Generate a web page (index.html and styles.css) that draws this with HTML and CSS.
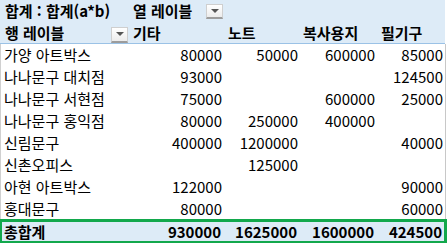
FILE: index.html
```html
<!DOCTYPE html>
<html lang="ko">
<head>
<meta charset="utf-8">
<link rel="stylesheet" href="styles.css">
</head>
<body>
<div class="pivot">
  <div class="row head head1">
    <div class="cell lbl">합계 : 합계(a*b)</div>
    <div class="cell lbl filter"><span>열 레이블</span><span class="dd dd1"></span></div>
    <div class="cell"></div><div class="cell"></div><div class="cell"></div>
  </div>
  <div class="row head head2">
    <div class="cell lbl filter"><span>행 레이블</span><span class="dd dd2"></span></div>
    <div class="cell lbl">기타</div>
    <div class="cell lbl c3">노트</div>
    <div class="cell lbl">복사용지</div>
    <div class="cell lbl c5">필기구</div>
  </div>
  <div class="row data"><div class="cell name">가양 아트박스</div><div class="cell num">80000</div><div class="cell num">50000</div><div class="cell num">600000</div><div class="cell num">85000</div></div>
  <div class="row data"><div class="cell name">나나문구 대치점</div><div class="cell num">93000</div><div class="cell num"></div><div class="cell num"></div><div class="cell num">124500</div></div>
  <div class="row data"><div class="cell name">나나문구 서현점</div><div class="cell num">75000</div><div class="cell num"></div><div class="cell num">600000</div><div class="cell num">25000</div></div>
  <div class="row data"><div class="cell name">나나문구 홍익점</div><div class="cell num">80000</div><div class="cell num">250000</div><div class="cell num">400000</div><div class="cell num"></div></div>
  <div class="row data"><div class="cell name">신림문구</div><div class="cell num">400000</div><div class="cell num">1200000</div><div class="cell num"></div><div class="cell num">40000</div></div>
  <div class="row data"><div class="cell name">신촌오피스</div><div class="cell num"></div><div class="cell num">125000</div><div class="cell num"></div><div class="cell num"></div></div>
  <div class="row data"><div class="cell name">아현 아트박스</div><div class="cell num">122000</div><div class="cell num"></div><div class="cell num"></div><div class="cell num">90000</div></div>
  <div class="row data"><div class="cell name">홍대문구</div><div class="cell num">80000</div><div class="cell num"></div><div class="cell num"></div><div class="cell num">60000</div></div>
  <div class="row total"><div class="cell name">총합계</div><div class="cell num">930000</div><div class="cell num">1625000</div><div class="cell num">1600000</div><div class="cell num">424500</div></div>
</div>
</body>
</html>
```
FILE: styles.css
```css
html, body {
  margin: 0;
  padding: 0;
  background: #ffffff;
}
body {
  font-family: "Noto Sans CJK KR", "Noto Sans", sans-serif;
  font-size: 15px;
  color: #000000;
}
.pivot {
  width: 445px;
  overflow: visible;
}
.row {
  display: grid;
  grid-template-columns: 130px 94px 76px 77px 68px;
  align-items: center;
}
.cell {
  line-height: 22px;
  height: 22px;
  white-space: nowrap;
  overflow: visible;
}
.head {
  background: #ddebf7;
  font-weight: bold;
}
.head1 {
  height: 22px;
}
.head2 {
  height: 21px;
  border-bottom: 1px solid #9bc2e6;
}
.head2 .cell {
  height: 21px;
  line-height: 21px;
}
.lbl {
  padding-left: 3px;
}
.head .cell:first-child {
  padding-left: 5px;
}
.c3 {
  padding-left: 4px;
}
.c5 {
  padding-left: 4px;
}
.filter {
  display: flex;
  align-items: center;
  justify-content: space-between;
}
.dd {
  position: relative;
  box-sizing: border-box;
  width: 17px;
  height: 15px;
  background: linear-gradient(#ffffff, #ececec);
  border: 1px solid #cfcfcf;
  border-bottom: 2px solid #9c9c9c;
}
.dd::after {
  content: "";
  position: absolute;
  left: 4px;
  top: 4px;
  border-left: 4px solid transparent;
  border-right: 4px solid transparent;
  border-top: 4px solid #555555;
}
.dd1 {
  margin-right: 1px;
  margin-top: 1px;
}
.dd2 {
  margin-right: 2px;
  height: 16px;
  margin-top: 4px;
}
.data {
  height: 22px;
  border-left: 1px solid #d0d0d0;
  border-right: 1px solid #c8c8c8;
  margin-right: -1px;
}
.data .cell.name {
  padding-left: 3px;
}
.num {
  text-align: right;
  padding-right: 3px;
}
.data .cell:first-child {
  margin-left: -1px;
  padding-left: 4px;
}
.total {
  height: 23px;
  background: #ddebf7;
  font-weight: bold;
  outline: 3px solid #12a84c;
  outline-offset: -2px;
  margin-right: -1px;
}
.total .cell {
  line-height: 23px;
  height: 23px;
}
.total .cell.name {
  padding-left: 4px;
}
```
